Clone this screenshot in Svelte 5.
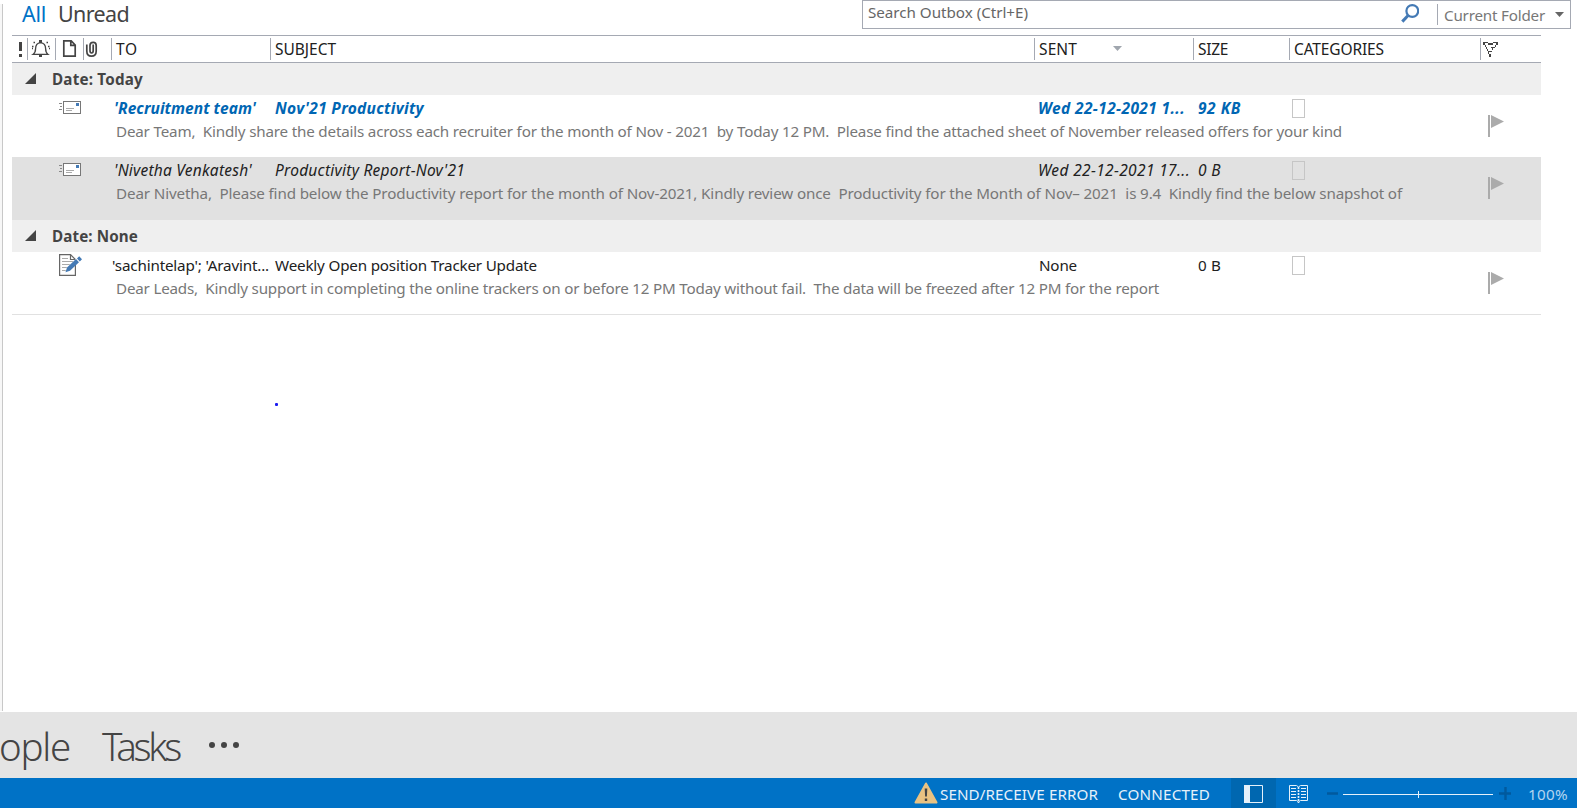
<script>
  // Spreads the letters of a label so that it takes exactly the given width.
  function fit(node, width) {
    const natural = node.getBoundingClientRect().width;
    const count = [...node.textContent].length;
    node.style.letterSpacing = `${(width - natural) / count}px`;
  }

  const columns = [
    { name: 'TO', width: 22 },
    { name: 'SUBJECT', width: 61 },
    { name: 'SENT', width: 38, sorted: true },
    { name: 'SIZE', width: 30 },
    { name: 'CATEGORIES', width: 90 }
  ];

  const groups = [
    {
      title: 'Date: Today',
      width: 91,
      mails: [
        {
          kind: 'unread', icon: 'mail',
          to: ["'Recruitment team'", 142],
          subject: ["Nov'21 Productivity", 149],
          sent: ['Wed 22-12-2021 1...', 147],
          size: ['92 KB', 43],
          preview: ['Dear Team,  Kindly share the details across each recruiter for the month of Nov - 2021  by Today 12 PM.  Please find the attached sheet of November released offers for your kind', 1226]
        },
        {
          kind: 'selected', icon: 'mail',
          to: ["'Nivetha Venkatesh'", 138],
          subject: ["Productivity Report-Nov'21", 190],
          sent: ['Wed 22-12-2021 17...', 152],
          size: ['0 B', 23],
          preview: ['Dear Nivetha,  Please find below the Productivity report for the month of Nov-2021, Kindly review once  Productivity for the Month of Nov– 2021  is 9.4  Kindly find the below snapshot of', 1286]
        }
      ]
    },
    {
      title: 'Date: None',
      width: 86,
      mails: [
        {
          kind: 'draft', icon: 'draft',
          to: ["'sachintelap'; 'Aravint...", 157],
          subject: ['Weekly Open position Tracker Update', 262],
          sent: ['None', 38],
          size: ['0 B', 23],
          preview: ['Dear Leads,  Kindly support in completing the online trackers on or before 12 PM Today without fail.  The data will be freezed after 12 PM for the report', 1043]
        }
      ]
    }
  ];
</script>

<div class="window">
  <main>
    <div class="edge"></div>
    <div class="pane">
      <div class="top">
        <nav class="filters">
          <span class="all"><span class="t" use:fit={24}>All</span></span>
          <span><span class="t" use:fit={71}>Unread</span></span>
        </nav>
        <div class="search">
          <span class="hint"><span class="t" use:fit={160}>Search Outbox (Ctrl+E)</span></span>
          <svg class="lens" width="18" height="19" viewBox="0 0 18 19" fill="none" stroke="#447ab5">
            <circle cx="11.3" cy="7" r="5.9" stroke-width="2.2" />
            <path d="M7.3 11.2L1.3 17.6" stroke-width="3" />
          </svg>
          <div class="scope">
            <span class="t" use:fit={101}>Current Folder</span>
            <svg width="9" height="5" viewBox="0 0 9 5"><path d="M0 0H9L4.5 5Z" fill="#666" /></svg>
          </div>
        </div>
      </div>

      <div class="head grid">
        <div>
          <svg width="15" height="27" viewBox="0 0 15 27" fill="#444"><path d="M7 7H10V16H7ZM7 19H10V22H7Z" /></svg>
        </div>
        <div>
          <svg width="28" height="27" viewBox="0 0 28 27" fill="none" stroke="#444" stroke-width="1.3">
            <path d="M6 19.4C8.6 17.5 8.6 16 8.6 13.5C8.6 10 10.5 8 13.5 7.6C16.5 8 18.6 10 18.6 13.5C18.6 16 18.6 17.5 21 19.4Z" />
            <path d="M12 5H15V8H12ZM12 19.5H15V22H12Z" fill="#444" stroke="none" />
            <path d="M5 11.5H6.5M6.5 7.5H8M5 13.5H6M21 11.5H22.5M19.5 7.5H21M22 13.5H23" stroke-width="1.6" />
          </svg>
        </div>
        <div>
          <svg width="28" height="27" viewBox="0 0 28 27" fill="none" stroke="#444" stroke-width="1.7">
            <path d="M8.8 5.8H16.2L20.2 10V21.2H8.8ZM15.8 6V10.3H20" />
          </svg>
        </div>
        <div>
          <svg width="28" height="27" viewBox="0 0 28 27" fill="none" stroke="#444" stroke-width="1.7">
            <path d="M3.8 9.5V16C3.8 19.5 5.5 21.2 8.5 21.2S13.2 19.5 13.2 16V10.5C13.2 8.5 12 7.4 10.2 7.4S7 8.5 7 10.5V15.8C7 17.2 7.6 18 8.6 18S10.2 17.2 10.2 15.8V9.5" />
          </svg>
        </div>
        {#each columns as column}
          <div class="name">
            <span class="t" use:fit={column.width}>{column.name}</span>
            {#if column.sorted}
              <svg width="9" height="5" viewBox="0 0 9 5"><path d="M0 0H9L4.5 5Z" fill="#a0a6ae" /></svg>
            {/if}
          </div>
        {/each}
        <div>
          <svg width="28" height="27" viewBox="0 0 28 27" fill="#444" shape-rendering="crispEdges">
            <path d="M3 7H8V8H3ZM13 7H18V8H13ZM3 8H5V10H3ZM8 8H13V10H8ZM16 8H18V10H16ZM5 10H6V12H5ZM15 10H16V12H15ZM6 12H7V14H6ZM11 12H15V13H11ZM7 14H8V16H7ZM12 13H13V15H12ZM8 16H12V17H8ZM8 17H9V19H8ZM9 19H11V22H9Z" />
          </svg>
        </div>
      </div>

      {#each groups as group}
        <div class="group">
          <svg width="11" height="11" viewBox="0 0 11 11"><path d="M11 0V11H0Z" fill="#444" /></svg>
          <span class="t" use:fit={group.width}>{group.title}</span>
        </div>
        {#each group.mails as mail}
          <div class="mail {mail.kind}">
            <div class="icon">
              {#if mail.icon === 'mail'}
                <svg class="letter" width="22" height="13" viewBox="0 0 22 13">
                  <rect x="4.5" y=".5" width="17" height="12" fill="#fff" stroke="#777" />
                  <rect x="17" y="2" width="3" height="3" fill="#447ab5" />
                  <path d="M7 7.5H15M7 9.5H13" stroke="#aaa" />
                  <path d="M0 2.5H3M1 5.5H3M0 8.5H3" stroke="#888" />
                </svg>
              {:else}
                <svg class="note" width="23" height="22" viewBox="0 0 23 22">
                  <path d="M.6 .6H11.5L16.4 5.5V21.4H.6Z" fill="#fff" stroke="#666" stroke-width="1.2" />
                  <path d="M11.5 .6V5.5H16.4" fill="none" stroke="#666" stroke-width="1.2" />
                  <path d="M3 4.5H9M3 7.5H14M3 10.5H12M3 13.5H9M3 16.5H7" stroke="#aaa" />
                  <path d="M6 18.7L8 13L18.3 3.8L21 6.8L10.7 16Z" fill="#fff" />
                  <path d="M6.5 18.2L8 13.6L17 5L20 8.2L11 16.8ZM18 4.4L20.2 2.2L23 5.2L20.8 7.4Z" fill="#447ab5" />
                </svg>
              {/if}
            </div>
            <div class="body">
              <div class="line">
                <span class="to"><span class="t" use:fit={mail.to[1]}>{mail.to[0]}</span></span>
                <span class="subject"><span class="t" use:fit={mail.subject[1]}>{mail.subject[0]}</span></span>
                <span class="sent"><span class="t" use:fit={mail.sent[1]}>{mail.sent[0]}</span></span>
                <span class="size"><span class="t" use:fit={mail.size[1]}>{mail.size[0]}</span></span>
                <span class="category"></span>
              </div>
              <div class="preview"><span class="t" use:fit={mail.preview[1]}>{mail.preview[0]}</span></div>
            </div>
            <svg class="flag" width="16" height="22" viewBox="0 0 16 22" fill="#ababab"><path d="M0 0H2V22H0ZM3 0L16 6.5L3 13Z" /></svg>
          </div>
        {/each}
      {/each}
      <div class="speck"></div>
    </div>
  </main>

  <div class="modules">
    <span class="people"><span class="t" use:fit={71}>ople</span></span>
    <span class="tasks"><span class="t" use:fit={77}>Tasks</span></span>
    <svg width="30" height="6" viewBox="0 0 30 6" fill="#444"><circle cx="3" cy="3" r="3" /><circle cx="15" cy="3" r="3" /><circle cx="27" cy="3" r="3" /></svg>
  </div>

  <footer>
    <svg class="warn" width="24" height="22" viewBox="0 0 24 22">
      <path d="M12 1.5L22.5 20.5H1.5Z" fill="#e9c282" stroke="#e9c282" stroke-width="2" stroke-linejoin="round" />
      <path d="M10.7 6.5H13.3L12.9 14.5H11.1ZM10.8 16.5H13.2V19H10.8Z" fill="#444" />
    </svg>
    <span class="error"><span class="t" use:fit={158}>SEND/RECEIVE ERROR</span></span>
    <span class="connected"><span class="t" use:fit={92}>CONNECTED</span></span>
    <div class="view active">
      <svg width="19" height="18" viewBox="0 0 19 18"><path d="M.5 .5H18.5V17.5H.5Z" fill="none" stroke="#e6f1fa" /><path d="M0 0H6V18H0Z" fill="#e6f1fa" /></svg>
    </div>
    <div class="view">
      <svg width="19" height="18" viewBox="0 0 19 18" fill="none" stroke="#e6f1fa">
        <path d="M.5 .5H7.5L9.5 2L11.5 .5H18.5V15.5H11.5L9.5 17L7.5 15.5H.5Z" />
        <path d="M2 3.5H7M2 6.5H7M2 9.5H7M2 12.5H7M12 3.5H17M12 6.5H17M12 9.5H17M12 12.5H17" />
        <path d="M9.5 2V18" stroke-width="1.6" stroke-dasharray="2 1" />
      </svg>
    </div>
    <svg class="zoom" width="184" height="14" viewBox="0 0 184 14">
      <path d="M0 6.5H11M172 6.5H185M178.5 0V13" stroke="#005a9e" stroke-width="2.4" />
      <path d="M16 7.5H166M91.5 4V11" stroke="#e6f1fa" />
    </svg>
    <span class="percent"><span class="t" use:fit={40}>100%</span></span>
  </footer>
</div>

<style>
  :global(body) { margin: 0; background: #fff; }
  .window {
    display: flex; flex-direction: column; width: 1577px; height: 808px; overflow: hidden;
    background: #fff; color: #212121; font: 15.2px/22px "Noto Sans", "Open Sans", sans-serif;
  }
  svg { display: block; flex: none; }
  .t { display: inline-block; white-space: pre; }
  main { display: flex; height: 712px; }
  .edge { width: 2px; height: 707px; margin-top: 4px; background: #f7f7f7; border-right: 1px solid #c8c8c8; }
  .pane { margin-left: 9px; width: 1565px; }
  .top { display: flex; justify-content: space-between; height: 35px; }
  .filters { display: flex; padding-left: 10px; font-size: 21.5px; line-height: 27px; color: #444; }
  .filters > span { width: 34px; white-space: nowrap; }
  .filters .all { color: #0072c6; width: 36px; }
  .search {
    display: flex; box-sizing: border-box; width: 709px; height: 29px; margin-right: 6px;
    border: 1px solid #a5a9b3; color: #666;
  }
  .hint { width: 533px; padding-left: 5px; margin-top: 0; }
  .lens { margin: 3px 0 0 0; }
  .scope {
    display: flex; align-items: center; gap: 10px; height: 21px; margin: 3px 0 0 18px; padding-left: 6px;
    border-left: 1px solid #a5a9b3; color: #777;
  }
  .grid { display: grid; grid-template-columns: 15px 28px 28px 28px 159px 764px 159px 96px 191px 61px; }
  .head { width: 1529px; height: 26px; border: solid #a5a9b3; border-width: 1px 0; font-size: 15.5px; }
  .head > div { position: relative; height: 22px; margin-top: 2px; border-left: 1px solid #a5a9b3; }
  .head > div > svg { margin: -3px 0 0 -1px; }
  .head > div:first-child { border-left-color: transparent; }
  .head > .name { display: flex; align-items: center; padding-left: 4px; }
  .head > .name > svg { margin: -2px 0 0 36px; }
  .group {
    display: flex; align-items: center; box-sizing: border-box; width: 1529px; height: 32px; padding-left: 13px;
    background: #efefef; color: #444; font-weight: 700;
  }
  .group svg { margin-right: 16px; margin-top: -2px; }
  .mail { display: flex; width: 1529px; height: 62px; }
  .selected { height: 63px; background: #e1e1e1; }
  .draft { border-bottom: 1px solid #e1e1e1; }
  .icon { width: 47px; padding-left: 47px; }
  .letter { margin-top: 6px; }
  .note { margin-top: 2px; }
  .body { width: 1361px; padding: 2px 0 0 6px; }
  .line { display: grid; grid-template-columns: 163px 764px 159px 90px 60px; height: 23px; white-space: nowrap; }
  .unread .to, .selected .to { padding-left: 2px; }
  .unread .line { color: #0066b3; font-size: 15.5px; font-weight: 700; font-style: italic; }
  .selected .line { font-size: 15.5px; font-style: italic; }
  .unread .sent .t, .selected .sent .t { margin-left: -1px; }
  .category { box-sizing: border-box; width: 13px; height: 19px; margin: 2px 0 0 4px; border: 1px solid #c6c6c6; }
  .preview { padding-left: 4px; color: #777; }
  .flag { margin: 20px 0 0 15px; }
  .speck { width: 3px; height: 3px; margin: 88px 0 0 263px; border-radius: 1px; background: #1c1cf0; }
  .modules { display: flex; height: 66px; background: #e4e4e4; color: #444; font-size: 38.5px; line-height: 66px; font-weight: 300; }
  .people { width: 102px; }
  .people .t { margin-left: -1px; }
  .tasks { width: 107px; }
  .people, .tasks { white-space: nowrap; padding-top: 1px; }
  .modules svg { margin-top: 30px; }
  footer { display: flex; height: 30px; background: #0072c6; color: #e6f1fa; line-height: 33px; white-space: nowrap; }
  .warn { margin: 4px 2px 0 914px; }
  .error { width: 178px; }
  .connected { width: 113px; }
  .view { width: 45px; height: 30px; padding-top: 7px; box-sizing: border-box; }
  .view svg { margin-left: 13px; }
  .active { background: #0067b0; }
  .zoom { margin: 9px 0 0 6px; }
  .percent { margin-left: 17px; color: #b3d5f0; }
</style>
